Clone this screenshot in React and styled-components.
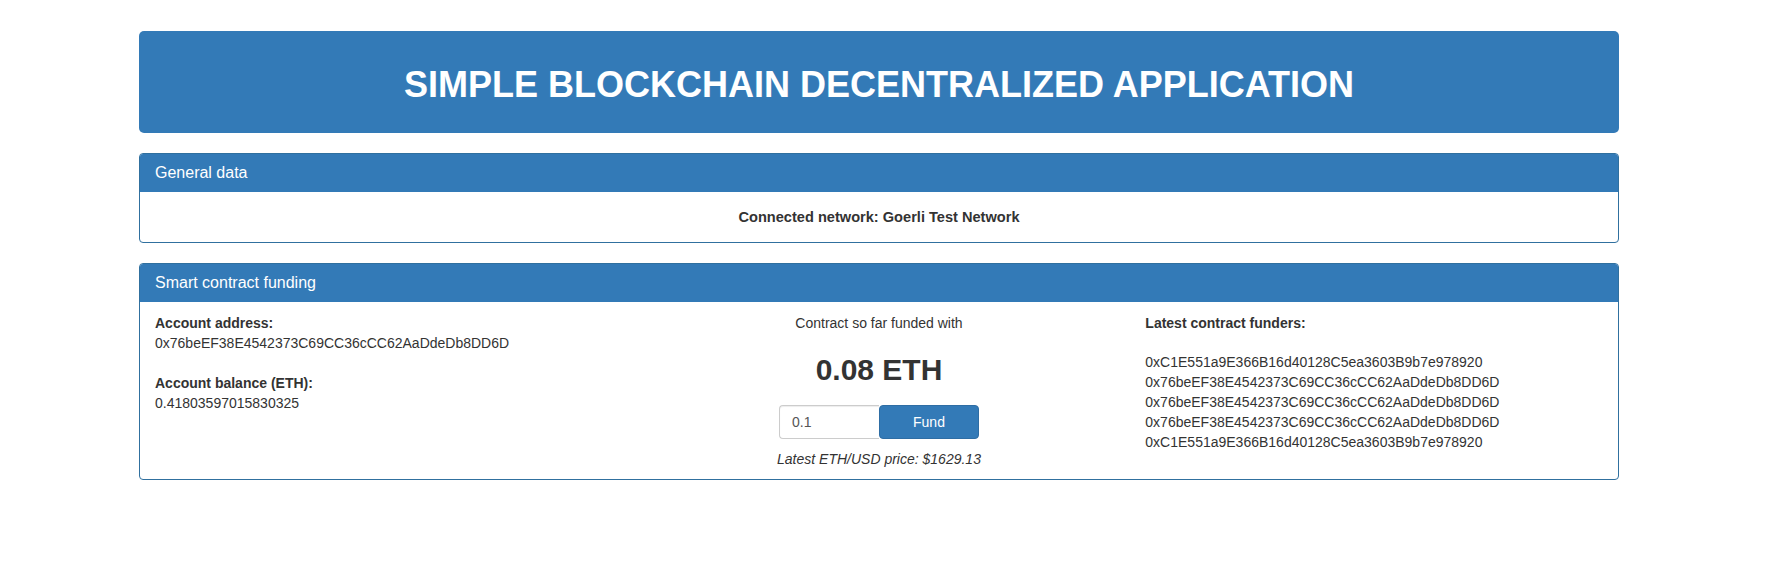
import React from "react";
import styled, { createGlobalStyle } from "styled-components";

const Global = createGlobalStyle`
  html, body { margin: 0; padding: 0; background: #fff; }
  body {
    font-family: "Liberation Sans", Arial, Helvetica, sans-serif;
    font-size: 14px;
    line-height: 20px;
    color: #333;
  }
  * { box-sizing: border-box; }
`;

const Page = styled.div`
  padding: 31px 152px 0 139px;
`;

const Hero = styled.header`
  background: #337ab7;
  border-radius: 5px;
  padding: 34px 0 28px;
  margin-bottom: 20px;
`;

const Title = styled.h1`
  margin: 0;
  font-size: 36px;
  line-height: 40px;
  font-weight: 700;
  color: #fff;
  text-align: center;
`;

const Panel = styled.section`
  border: 1px solid #30709f;
  border-radius: 4px;
  background: #fff;
  margin-bottom: 20px;
  overflow: hidden;
`;

const PanelHeading = styled.div`
  background: #337ab7;
  border-bottom: 1px solid #337ab7;
  padding: 10px 15px;
`;

const PanelTitle = styled.h3`
  margin: 0;
  font-size: 16px;
  line-height: 17px;
  font-weight: 400;
  color: #fff;
`;

const PanelBody = styled.div`
  padding: ${(p) => p.$pad || "15px"};
`;

const NetworkLine = styled.div`
  text-align: center;
  font-weight: 700;
  font-size: 14.6px;
  line-height: 20px;
`;

const Columns = styled.div`
  display: grid;
  grid-template-columns: 1fr 1fr 1fr;
`;

const Column = styled.div`
  padding-left: ${(p) => p.$indent || 0}px;
  text-align: ${(p) => (p.$center ? "center" : "left")};
`;

const Field = styled.div`
  margin-bottom: ${(p) => p.$gap || 0}px;
`;

const Label = styled.div`
  font-weight: 700;
  margin-bottom: ${(p) => p.$gap || 0}px;
`;

const Value = styled.div``;

const Amount = styled.h2`
  margin: 20px 0 19px;
  font-size: 30px;
  line-height: 33px;
  font-weight: 700;
  color: #333;
`;

const FundForm = styled.div`
  display: flex;
  justify-content: center;
  margin-bottom: 10px;
`;

const AmountInput = styled.input`
  width: 100px;
  height: 34px;
  padding: 6px 12px;
  font-family: inherit;
  font-size: 14px;
  color: #555;
  border: 1px solid #ccc;
  border-right: none;
  border-radius: 4px 0 0 4px;
  box-shadow: inset 0 1px 1px rgba(0, 0, 0, 0.075);
  outline: none;
`;

const FundButton = styled.button`
  width: 100px;
  height: 34px;
  font-family: inherit;
  font-size: 14px;
  color: #fff;
  background: #337ab7;
  border: 1px solid #2e6da4;
  border-radius: 4px;
  cursor: pointer;
`;

const Price = styled.div`
  font-style: italic;
`;

const funders = [
  "0xC1E551a9E366B16d40128C5ea3603B9b7e978920",
  "0x76beEF38E4542373C69CC36cCC62AaDdeDb8DD6D",
  "0x76beEF38E4542373C69CC36cCC62AaDdeDb8DD6D",
  "0x76beEF38E4542373C69CC36cCC62AaDdeDb8DD6D",
  "0xC1E551a9E366B16d40128C5ea3603B9b7e978920",
];

export default function App() {
  return (
    <>
      <Global />
      <Page>
        <Hero>
          <Title>SIMPLE BLOCKCHAIN DECENTRALIZED APPLICATION</Title>
        </Hero>

        <Panel>
          <PanelHeading>
            <PanelTitle>General data</PanelTitle>
          </PanelHeading>
          <PanelBody>
            <NetworkLine>Connected network: Goerli Test Network</NetworkLine>
          </PanelBody>
        </Panel>

        <Panel>
          <PanelHeading>
            <PanelTitle>Smart contract funding</PanelTitle>
          </PanelHeading>
          <PanelBody $pad="11px 15px 10px">
            <Columns>
              <Column>
                <Field $gap={20}>
                  <Label>Account address:</Label>
                  <Value>0x76beEF38E4542373C69CC36cCC62AaDdeDb8DD6D</Value>
                </Field>
                <Field>
                  <Label>Account balance (ETH):</Label>
                  <Value>0.41803597015830325</Value>
                </Field>
              </Column>
              <Column $center>
                <Value>Contract so far funded with</Value>
                <Amount>0.08 ETH</Amount>
                <FundForm>
                  <AmountInput defaultValue="0.1" />
                  <FundButton>Fund</FundButton>
                </FundForm>
                <Price>Latest ETH/USD price: $1629.13</Price>
              </Column>
              <Column $indent={25}>
                <Label $gap={19}>Latest contract funders:</Label>
                {funders.map((f, i) => (
                  <Value key={i}>{f}</Value>
                ))}
              </Column>
            </Columns>
          </PanelBody>
        </Panel>
      </Page>
    </>
  );
}
